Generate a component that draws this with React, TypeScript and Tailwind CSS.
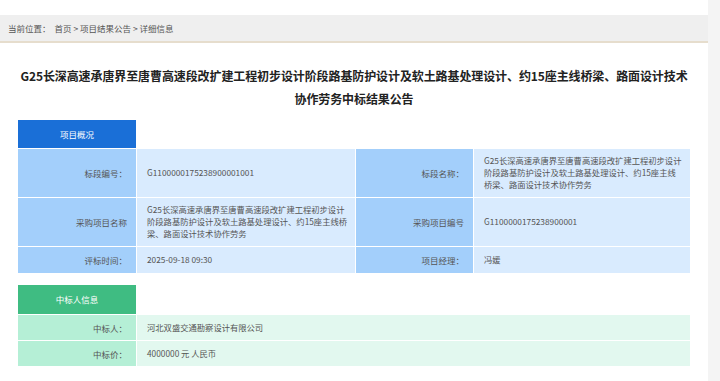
const font = {
  fontFamily: '"Noto Sans CJK SC", "Liberation Sans", sans-serif',
};

function Label({ children, h, green }: { children: React.ReactNode; h: string; green?: boolean }) {
  return (
    <div
      className={`${h} flex items-center justify-end pr-[9px] text-[8.5px] leading-[12px] text-[#555] whitespace-nowrap ${
        green ? "bg-[#b5efd6]" : "bg-[#a3cffb]"
      }`}
    >
      {children}
    </div>
  );
}

function Value({ children, h, green }: { children: React.ReactNode; h: string; green?: boolean }) {
  return (
    <div
      className={`${h} flex items-center pl-[10px] text-[8.3px] leading-[11.7px] text-[#555] whitespace-nowrap overflow-hidden ${
        green ? "bg-[#e2f8ef]" : "bg-[#d9ebfe]"
      }`}
    >
      <div>{children}</div>
    </div>
  );
}

export default function App() {
  return (
    <div className="flex w-[720px] h-[381px] bg-white overflow-hidden" style={font}>
      <div className="w-[708px] pt-[15px]">
        <div className="h-[28px] bg-[#efefef] border-b-2 border-[#e6ddcd] px-[8px] flex items-center text-[8.5px] text-[#555]">
          <span>当前位置：</span>
          <span className="ml-[4px]">首页 &gt; 项目结果公告 &gt; 详细信息</span>
        </div>

        <h1 className="mt-[21px] text-center text-[12px] font-bold leading-[23px] text-[#222] whitespace-nowrap tracking-[-0.1px]">
          G25长深高速承唐界至唐曹高速段改扩建工程初步设计阶段路基防护设计及软土路基处理设计、约15座主线桥梁、路面设计技术
          <br />
          协作劳务中标结果公告
        </h1>

        <section className="mx-[18px] mt-[10px]">
          <div className="w-[118px] h-[28px] mb-px bg-[#1a6fd7] text-white text-[8.5px] flex items-center justify-center">
            项目概况
          </div>
          <div className="grid grid-cols-[118px_218px_117px_216px] gap-px">
            <Label h="h-[48px]">标段编号：</Label>
            <Value h="h-[48px]">G1100000175238900001001</Value>
            <Label h="h-[48px]">标段名称：</Label>
            <Value h="h-[48px]">
              G25长深高速承唐界至唐曹高速段改扩建工程初步设计
              <br />
              阶段路基防护设计及软土路基处理设计、约15座主线
              <br />
              桥梁、路面设计技术协作劳务
            </Value>

            <Label h="h-[48px]">采购项目名称</Label>
            <Value h="h-[48px]">
              G25长深高速承唐界至唐曹高速段改扩建工程初步设计
              <br />
              阶段路基防护设计及软土路基处理设计、约15座主线桥
              <br />
              梁、路面设计技术协作劳务
            </Value>
            <Label h="h-[48px]">采购项目编号</Label>
            <Value h="h-[48px]">G1100000175238900001</Value>

            <Label h="h-[26px]">评标时间：</Label>
            <Value h="h-[26px]">2025-09-18 09:30</Value>
            <Label h="h-[26px]">项目经理：</Label>
            <Value h="h-[26px]">冯媛</Value>
          </div>
        </section>

        <section className="mx-[18px] mt-[12px]">
          <div className="w-[118px] h-[29px] mb-px bg-[#3fbc82] text-white text-[8.5px] flex items-center justify-center">
            中标人信息
          </div>
          <div className="grid grid-cols-[118px_1fr] gap-px">
            <Label h="h-[25px]" green>
              中标人：
            </Label>
            <Value h="h-[25px]" green>
              河北双盛交通勘察设计有限公司
            </Value>
            <Label h="h-[25px]" green>
              中标价：
            </Label>
            <Value h="h-[25px]" green>
              4000000 元 人民币
            </Value>
          </div>
        </section>
      </div>
      <div className="w-[12px] bg-[#f4f4f4]" />
    </div>
  );
}
